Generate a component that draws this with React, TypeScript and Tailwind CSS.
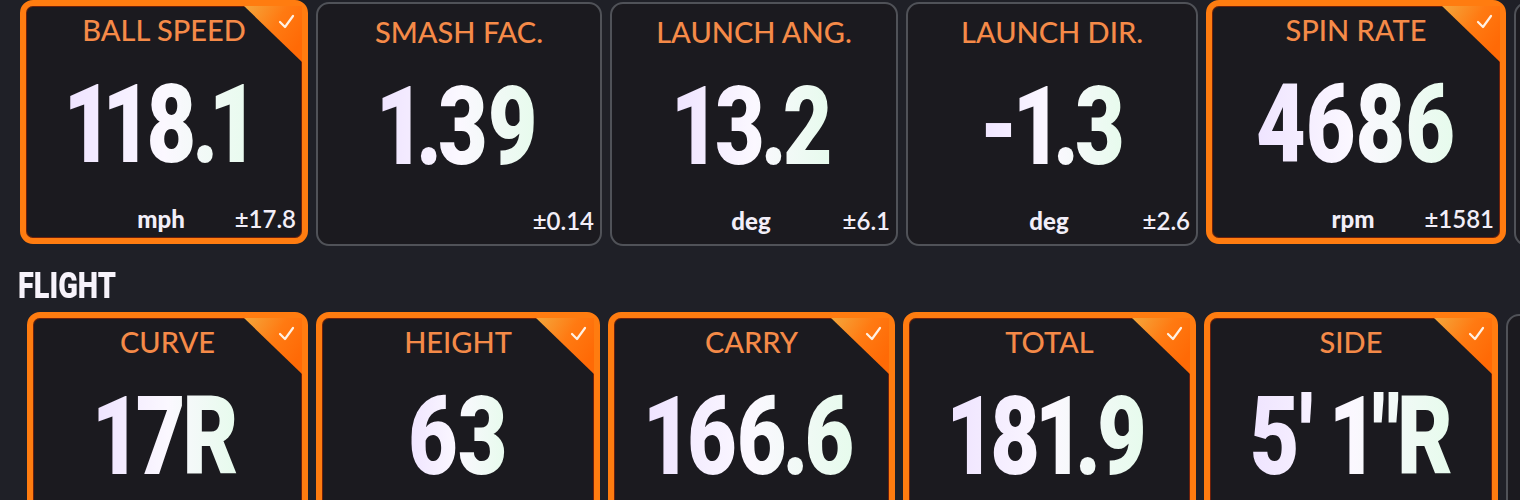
import React from 'react';

type Metric = {
  label: string;
  value: string;
  unit?: string;
  sd?: string;
  active: boolean;
  width: string;
};

const shotRow: Metric[] = [
  { label: 'BALL SPEED', value: '118.1', unit: 'mph', sd: '±17.8', active: true, width: 'w-[288px]' },
  { label: 'SMASH FAC.', value: '1.39', sd: '±0.14', active: false, width: 'w-[286px]' },
  { label: 'LAUNCH ANG.', value: '13.2', unit: 'deg', sd: '±6.1', active: false, width: 'w-[288px]' },
  { label: 'LAUNCH DIR.', value: '-1.3', unit: 'deg', sd: '±2.6', active: false, width: 'w-[292px]' },
  { label: 'SPIN RATE', value: '4686', unit: 'rpm', sd: '±1581', active: true, width: 'w-[300px]' },
];

const flightRow: Metric[] = [
  { label: 'CURVE', value: '17R', active: true, width: 'w-[281px]' },
  { label: 'HEIGHT', value: '63', active: true, width: 'w-[284px]' },
  { label: 'CARRY', value: '166.6', active: true, width: 'w-[287px]' },
  { label: 'TOTAL', value: '181.9', active: true, width: 'w-[293px]' },
  { label: 'SIDE', value: "5' 1\"R", active: true, width: 'w-[294px]' },
];

const roboto = { fontFamily: 'Roboto, "Open Sans", sans-serif' };
const lato = { fontFamily: 'Lato, "Open Sans", sans-serif' };

// the display font sets 1, . and R tighter than Roboto's tabular figures
const trim: Record<string, number> = { '1': 7, '.': 5, R: 4 };

// letter-spacing per char so the glyph boxes stay side by side
const spacing = (value: string) =>
  value.split('').map((c, i) => {
    const next = value[i + 1];
    const right = next === undefined ? 0 : (trim[c] ?? 0) + (trim[next] ?? 0);
    return { c, ls: -right, ml: i === 0 ? -(trim[c] ?? 0) : 0 };
  });

// orange corner flag with the check mark
const CornerFlag = () => (
  <svg className="absolute top-0 right-0" width="58" height="56" viewBox="0 0 58 56">
    <defs>
      <linearGradient id="flag" x1="0" y1="0" x2="1" y2="0.6">
        <stop offset="0" stopColor="#f4a73c" />
        <stop offset="0.55" stopColor="#ff7a12" />
        <stop offset="1" stopColor="#ff6a06" />
      </linearGradient>
    </defs>
    <polygon points="0,0 58,0 58,56" fill="url(#flag)" />
    <polyline
      points="36,16 41,21 49,10"
      fill="none"
      stroke="#fff1e4"
      strokeWidth="2.2"
      strokeLinecap="round"
      strokeLinejoin="round"
    />
  </svg>
);

const MetricCard: React.FC<{ m: Metric }> = ({ m }) => {
  const frame = m.active
    ? 'border-[6px] border-[#ff7c10] shadow-[inset_0_0_0_1px_#6e200a] pt-[9px]'
    : 'border-2 border-[#505258] mt-[2px] pt-[13px]';
  return (
    <div className={`relative shrink-0 ${m.width} h-[244px] rounded-[13px] bg-[#1b1a1f] ${frame} flex flex-col`}>
      {m.active && <CornerFlag />}
      <div className="text-center text-[29px] leading-none font-medium text-[#f58a48]" style={lato}>
        {m.label}
      </div>
      <div className="mt-[26px] flex justify-center h-[110px]">
        <span
          className="shrink-0 inline-block whitespace-nowrap scale-x-[0.78] text-[110px] leading-none font-black bg-linear-to-r from-[#efe4ff] via-[#fbf8ff] to-[#e6fbec] bg-clip-text text-transparent"
          style={roboto}
        >
          {spacing(m.value).map(({ c, ls, ml }, i) => (
            <span key={i} style={{ letterSpacing: `${ls}px`, marginLeft: `${ml}px` }}>
              {c}
            </span>
          ))}
        </span>
      </div>
      <div className="mt-[27px] grid grid-cols-3 items-end pr-[6px] text-[24px] leading-none text-[#f2eef8]" style={lato}>
        <span />
        <span className="text-center font-black">{m.unit ?? ''}</span>
        <span className="text-right font-semibold">{m.sd ?? ''}</span>
      </div>
    </div>
  );
};

// partly visible card at the right edge of a row
const EdgeCard = () => (
  <div className="shrink-0 mt-[2px] w-[290px] h-[244px] rounded-[13px] border-2 border-[#505258] bg-[#1b1a1f]" />
);

export default function App() {
  return (
    <div className="w-[1520px] h-[500px] overflow-hidden bg-[#1f2027]">
      <div className="flex gap-2 pl-[20px]">
        {shotRow.map((m) => (
          <MetricCard key={m.label} m={m} />
        ))}
        <EdgeCard />
      </div>
      <div className="mt-[21px] pl-[18px] h-[37px]">
        <span
          className="inline-block origin-left scale-x-[0.78] text-[37px] leading-none font-black text-[#f7f3fb]"
          style={roboto}
        >
          FLIGHT
        </span>
      </div>
      <div className="mt-[8px] flex gap-2 pl-[27px]">
        {flightRow.map((m) => (
          <MetricCard key={m.label} m={m} />
        ))}
        <EdgeCard />
      </div>
    </div>
  );
}
